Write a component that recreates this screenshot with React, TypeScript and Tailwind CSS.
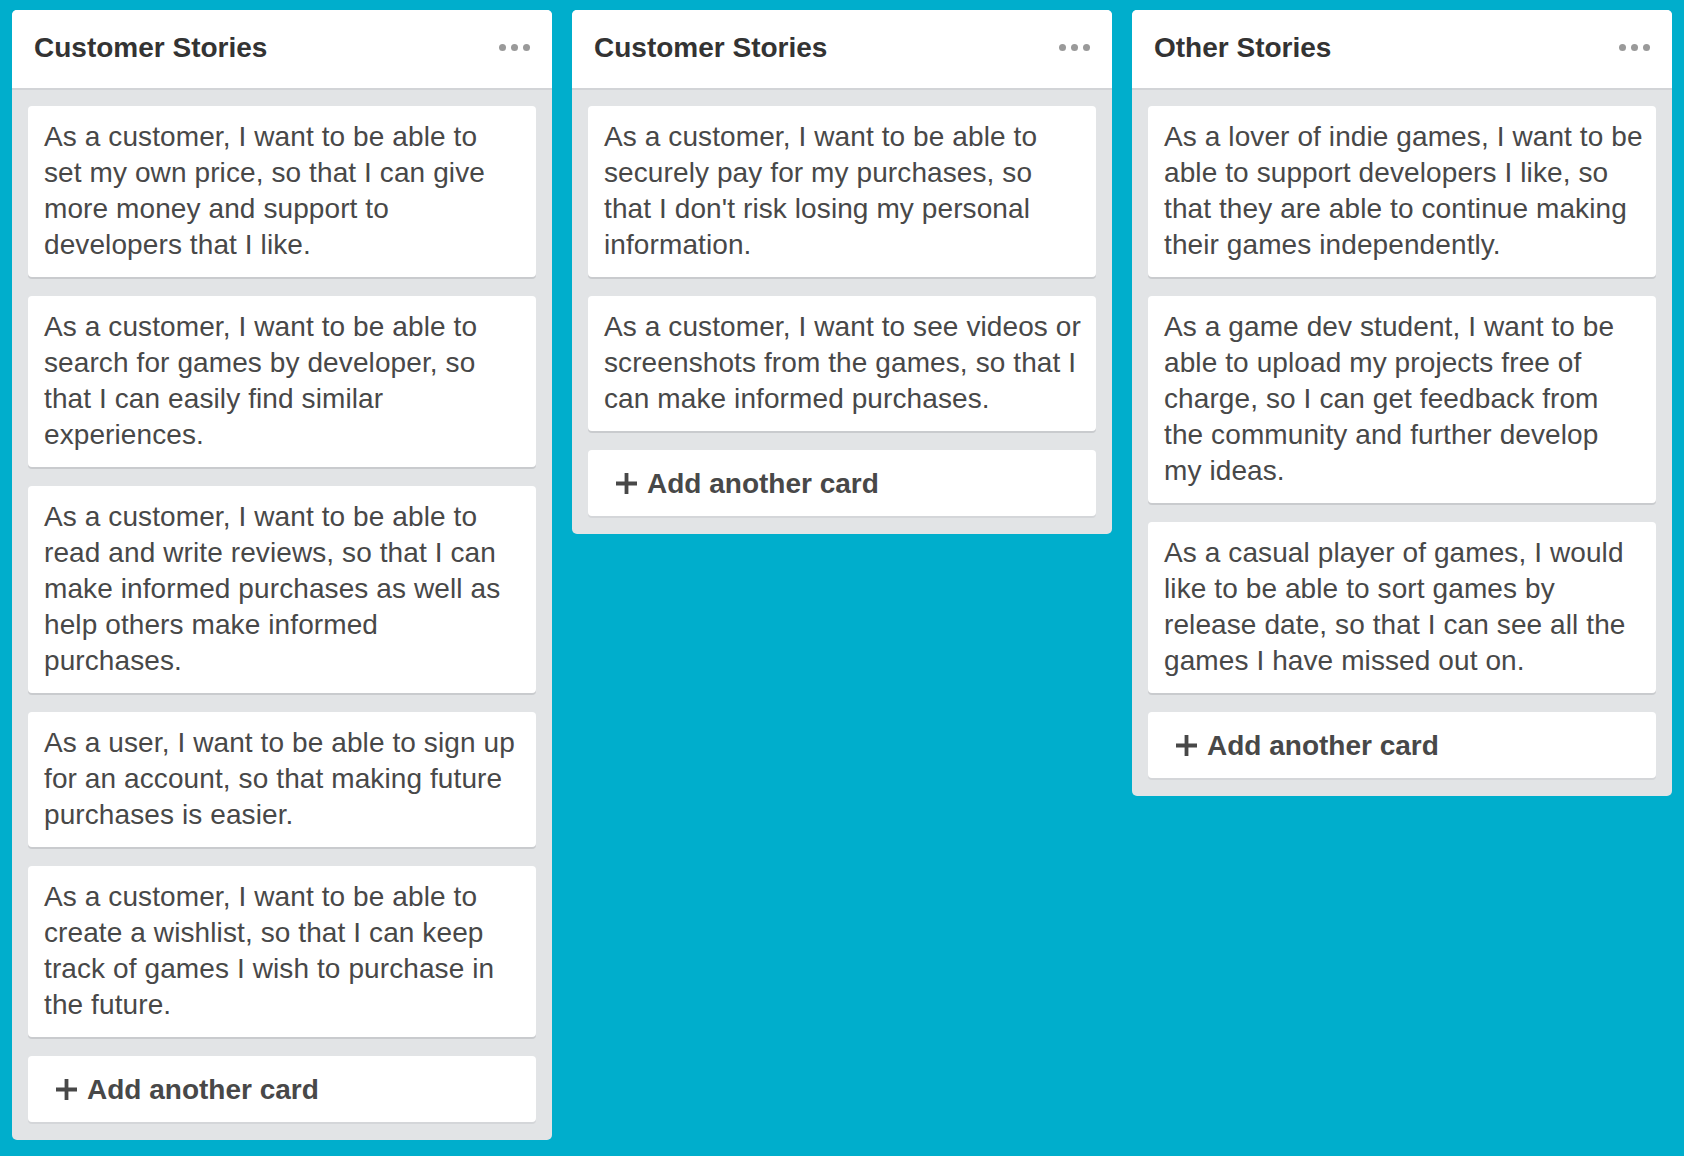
import React from 'react';

interface StoryList {
  id: string;
  title: string;
  // each card keeps its lines as shown on the board
  cards: string[][];
}

const lists: StoryList[] = [
  {
    id: 'customer-1',
    title: 'Customer Stories',
    cards: [
      [
        'As a customer, I want to be able to',
        'set my own price, so that I can give',
        'more money and support to',
        'developers that I like.',
      ],
      [
        'As a customer, I want to be able to',
        'search for games by developer, so',
        'that I can easily find similar',
        'experiences.',
      ],
      [
        'As a customer, I want to be able to',
        'read and write reviews, so that I can',
        'make informed purchases as well as',
        'help others make informed',
        'purchases.',
      ],
      [
        'As a user, I want to be able to sign up',
        'for an account, so that making future',
        'purchases is easier.',
      ],
      [
        'As a customer, I want to be able to',
        'create a wishlist, so that I can keep',
        'track of games I wish to purchase in',
        'the future.',
      ],
    ],
  },
  {
    id: 'customer-2',
    title: 'Customer Stories',
    cards: [
      [
        'As a customer, I want to be able to',
        'securely pay for my purchases, so',
        "that I don't risk losing my personal",
        'information.',
      ],
      [
        'As a customer, I want to see videos or',
        'screenshots from the games, so that I',
        'can make informed purchases.',
      ],
    ],
  },
  {
    id: 'other',
    title: 'Other Stories',
    cards: [
      [
        'As a lover of indie games, I want to be',
        'able to support developers I like, so',
        'that they are able to continue making',
        'their games independently.',
      ],
      [
        'As a game dev student, I want to be',
        'able to upload my projects free of',
        'charge, so I can get feedback from',
        'the community and further develop',
        'my ideas.',
      ],
      [
        'As a casual player of games, I would',
        'like to be able to sort games by',
        'release date, so that I can see all the',
        'games I have missed out on.',
      ],
    ],
  },
];

const StoryCard: React.FC<{ lines: string[] }> = ({ lines }) => (
  <div className="mb-[19px] rounded-[4px] bg-white pl-4 pr-3 pt-[13px] pb-[14px] text-[28px] leading-[36px] tracking-[0.1px] text-[#484848] shadow-[0_2px_0_#c9cbce]">
    {lines.map((line, i) => (
      <div key={i} className="whitespace-nowrap">
        {line}
      </div>
    ))}
  </div>
);

const AddCardButton: React.FC = () => (
  <button className="flex h-[66px] w-full items-start rounded-[4px] bg-white pl-[27px] pt-4 text-left shadow-[0_2px_0_#d4d6d9]">
    <svg className="mt-[6px] mr-[9px] h-[23px] w-[23px] shrink-0" viewBox="0 0 23 23" fill="none" stroke="#484848" strokeWidth={3.8}>
      <path d="M11.5 1v21M1 11.5h21" />
    </svg>
    <span className="text-[28px] font-bold leading-[36px] text-[#484848]">Add another card</span>
  </button>
);

const ListColumn: React.FC<{ list: StoryList }> = ({ list }) => (
  <div className="w-[540px] shrink-0 overflow-hidden rounded-[5px] bg-[#e2e4e6]">
    <div className="flex h-[80px] items-center justify-between border-b-2 border-[#d2d4d7] bg-white pl-[22px] pr-[22px] pb-[2px]">
      <h2 className="text-[28px] font-bold leading-[36px] text-[#333333]">{list.title}</h2>
      <div className="flex items-center gap-[5px] pb-[2px]">
        <span className="h-[7px] w-[7px] rounded-full bg-[#9a9a9a]" />
        <span className="h-[7px] w-[7px] rounded-full bg-[#9a9a9a]" />
        <span className="h-[7px] w-[7px] rounded-full bg-[#9a9a9a]" />
      </div>
    </div>
    <div className="px-4 pt-4 pb-[18px]">
      {list.cards.map((lines, i) => (
        <StoryCard key={i} lines={lines} />
      ))}
      <AddCardButton />
    </div>
  </div>
);

const App: React.FC = () => {
  return (
    <div className="min-h-[1156px] w-full bg-[#00aecc] font-['Liberation_Sans',Arial,sans-serif]">
      <div className="flex items-start gap-5 pl-3 pt-[10px]">
        {lists.map((list) => (
          <ListColumn key={list.id} list={list} />
        ))}
      </div>
    </div>
  );
};

export default App;
